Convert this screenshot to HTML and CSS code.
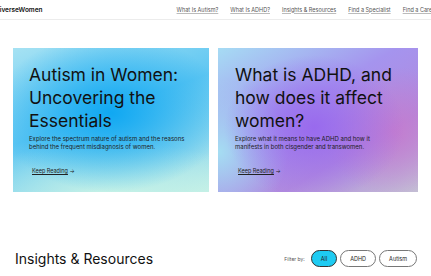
FILE: index.html
```html
<!DOCTYPE html>
<html>
<head>
    <meta charset="UTF-8">
    <meta name="viewport" content="width=device-width, initial-scale=1.0">
    <title>DiverseWomen</title>
    <link rel="stylesheet" href="styles.css">
</head>
<body>

    <header class="topbar">
        <div class="logo">DiverseWomen</div>
        <nav class="nav">
            <a href="#">What Is Autism?</a>
            <a href="#">What Is ADHD?</a>
            <a href="#">Insights &amp; Resources</a>
            <a href="#">Find a Specialist</a>
            <a href="#">Find a Career</a>
        </nav>
    </header>

    <section class="hero">
        <div class="card autism">
            <h2>Autism in Women: Uncovering the Essentials</h2>
            <p>Explore the spectrum nature of autism and the reasons behind the frequent misdiagnosis of women.</p>
            <a class="more" href="#"><span>Keep Reading</span> &rarr;</a>
        </div>
        <div class="card adhd">
            <h2>What is ADHD, and how does it affect women?</h2>
            <p>Explore what it means to have ADHD and how it manifests in both cisgender and transwomen.</p>
            <a class="more" href="#"><span>Keep Reading</span> &rarr;</a>
        </div>
    </section>

    <section class="resources">
        <h3>Insights &amp; Resources</h3>
        <div class="filters">
            <span class="filterLabel">Filter by:</span>
            <button class="pill active">All</button>
            <button class="pill">ADHD</button>
            <button class="pill">Autism</button>
        </div>
    </section>

</body>
</html>
```

FILE: styles.css
```css
body {
    font-family: Inter, "Noto Sans", sans-serif;
    background-color: #fff;
    color: #111;
    margin: 0;
    padding: 0;
    overflow: hidden;
}

.topbar {
    display: flex;
    align-items: center;
    height: 19px;
    border-bottom: 1px solid #ececec;
    white-space: nowrap;
}

.logo {
    margin-left: -5px;
    font-size: 6.5px;
    font-weight: 600;
    color: #111;
}

.nav {
    display: flex;
    gap: 12px;
    margin-left: 134px;
}

.nav a {
    font-size: 5.5px;
    color: #555;
    text-decoration: underline;
    text-decoration-color: #bbb;
}

.hero {
    display: grid;
    grid-template-columns: 196px 200px;
    gap: 9px;
    padding: 28px 0 0 13px;
}

.card {
    height: 144px;
    box-sizing: border-box;
    padding: 15px 14px 0 16px;
}

.autism {
    background:
        radial-gradient(ellipse 60% 55% at 50% 45%, rgba(16, 168, 242, 1), rgba(16, 168, 242, 0) 100%),
        radial-gradient(ellipse 80% 40% at 50% 105%, #c8f3e6, rgba(200, 243, 230, 0) 100%),
        linear-gradient(160deg, #a6e2f3 0%, #5ec6f2 45%, #8fd8ee 75%, #c3efe6 100%);
}

.adhd {
    padding-left: 17px;
    background:
        radial-gradient(ellipse 45% 50% at 48% 55%, rgba(152, 104, 238, 0.95), rgba(152, 104, 238, 0) 100%),
        radial-gradient(ellipse 35% 45% at 88% 58%, rgba(198, 122, 205, 0.85), rgba(198, 122, 205, 0) 100%),
        radial-gradient(ellipse 35% 50% at 0% 72%, rgba(165, 222, 242, 1), rgba(165, 222, 242, 0) 100%),
        linear-gradient(150deg, #a6dcf4 0%, #a594ee 40%, #b08ade 70%, #c4c0d4 100%);
}

h2 {
    margin: 0;
    font-size: 17.5px;
    line-height: 23px;
    font-weight: 400;
    color: #111;
}

.card p {
    max-width: 160px;
    margin: 3px 0 0 0;
    font-size: 6px;
    line-height: 7.5px;
    color: #1c1c1c;
}

.more {
    display: inline-block;
    margin: 18px 0 0 3px;
    font-size: 5.5px;
    color: #222;
    text-decoration: none;
}

.more span {
    text-decoration: underline;
}

.resources {
    display: flex;
    align-items: center;
    justify-content: space-between;
    padding: 58px 14px 0 15px;
}

h3 {
    margin: 0;
    font-size: 14px;
    font-weight: 400;
    color: #111;
}

.filters {
    display: flex;
    align-items: center;
    gap: 3px;
}

.filterLabel {
    font-size: 5px;
    color: #555;
    margin-right: 3px;
}

.pill {
    height: 17px;
    padding: 0 9px;
    border-radius: 9px;
    border: 1px solid #777;
    background-color: #fff;
    font-family: Inter, sans-serif;
    font-size: 5.5px;
    color: #222;
}

.active {
    background-color: #1ecbf2;
    border-color: #333;
    padding: 0 9px;
}
```
